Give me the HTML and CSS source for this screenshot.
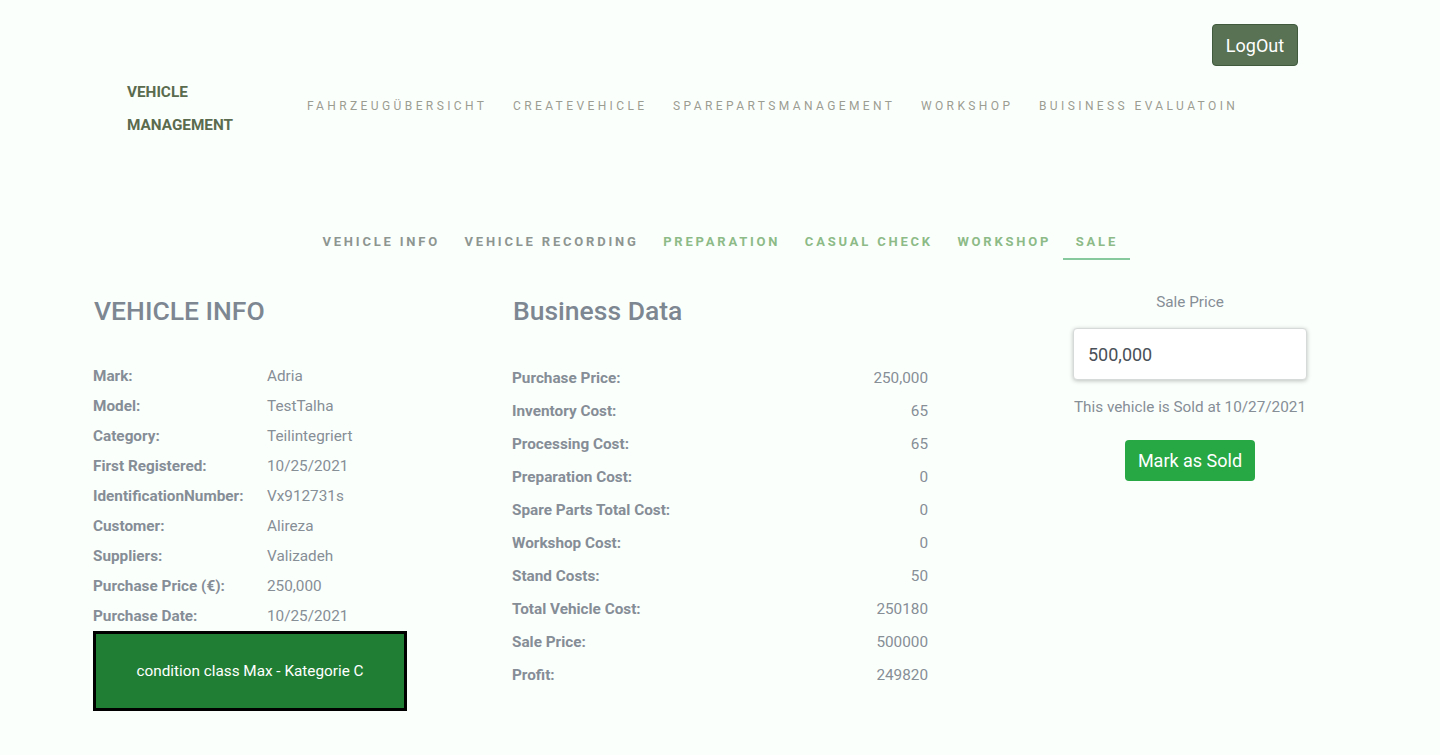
FILE: index.html
```html
<!DOCTYPE html>
<html>
<head>
<meta charset="utf-8">
<link rel="stylesheet" href="styles.css">
</head>
<body>
<div class="topbar">
  <button class="logout">LogOut</button>
</div>
<nav class="navbar">
  <div class="brand">VEHICLE<br>MANAGEMENT</div>
  <ul class="navlinks">
    <li>FAHRZEUGÜBERSICHT</li>
    <li>CREATEVEHICLE</li>
    <li>SPAREPARTSMANAGEMENT</li>
    <li>WORKSHOP</li>
    <li>BUISINESS EVALUATOIN</li>
  </ul>
</nav>
<div class="tabs">
  <span class="tab grey">VEHICLE INFO</span>
  <span class="tab grey">VEHICLE RECORDING</span>
  <span class="tab green">PREPARATION</span>
  <span class="tab green">CASUAL CHECK</span>
  <span class="tab green">WORKSHOP</span>
  <span class="tab green active">SALE</span>
</div>
<main class="content">
  <section class="col info">
    <h2 class="title upper">VEHICLE INFO</h2>
    <div class="info-rows">
      <div class="irow"><span class="lbl">Mark:</span><span class="val">Adria</span></div>
      <div class="irow"><span class="lbl">Model:</span><span class="val">TestTalha</span></div>
      <div class="irow"><span class="lbl">Category:</span><span class="val">Teilintegriert</span></div>
      <div class="irow"><span class="lbl">First Registered:</span><span class="val">10/25/2021</span></div>
      <div class="irow"><span class="lbl">IdentificationNumber:</span><span class="val">Vx912731s</span></div>
      <div class="irow"><span class="lbl">Customer:</span><span class="val">Alireza</span></div>
      <div class="irow"><span class="lbl">Suppliers:</span><span class="val">Valizadeh</span></div>
      <div class="irow"><span class="lbl">Purchase Price (€):</span><span class="val">250,000</span></div>
      <div class="irow"><span class="lbl">Purchase Date:</span><span class="val">10/25/2021</span></div>
    </div>
    <div class="condition">condition class Max - Kategorie C</div>
  </section>
  <section class="col business">
    <h2 class="title">Business Data</h2>
    <div class="brows">
      <div class="brow"><span class="lbl">Purchase Price:</span><span class="val">250,000</span></div>
      <div class="brow"><span class="lbl">Inventory Cost:</span><span class="val">65</span></div>
      <div class="brow"><span class="lbl">Processing Cost:</span><span class="val">65</span></div>
      <div class="brow"><span class="lbl">Preparation Cost:</span><span class="val">0</span></div>
      <div class="brow"><span class="lbl">Spare Parts Total Cost:</span><span class="val">0</span></div>
      <div class="brow"><span class="lbl">Workshop Cost:</span><span class="val">0</span></div>
      <div class="brow"><span class="lbl">Stand Costs:</span><span class="val">50</span></div>
      <div class="brow"><span class="lbl">Total Vehicle Cost:</span><span class="val">250180</span></div>
      <div class="brow"><span class="lbl">Sale Price:</span><span class="val">500000</span></div>
      <div class="brow"><span class="lbl">Profit:</span><span class="val">249820</span></div>
    </div>
  </section>
  <section class="col sale">
    <label class="sale-label">Sale Price</label>
    <input class="sale-input" type="text" value="500,000">
    <p class="sold-note">This vehicle is Sold at 10/27/2021</p>
    <button class="sold-btn">Mark as Sold</button>
  </section>
</main>
</body>
</html>
```
FILE: styles.css
```css
* { box-sizing: border-box; }
html, body { margin: 0; padding: 0; }
body {
  background: #fbfffc;
  font-family: Roboto, "Liberation Sans", sans-serif;
  color: #868e96;
  width: 1440px;
  height: 755px;
  overflow: hidden;
}
.topbar {
  display: flex;
  justify-content: flex-end;
  padding: 24px 142px 0 0;
  height: 66px;
}
.logout {
  width: 86px;
  height: 42px;
  background: #587253;
  border: 1px solid #3f5a3c;
  border-radius: 4px;
  color: #fff;
  font-family: Roboto, sans-serif;
  font-size: 18px;
  padding: 0;
}
.navbar {
  display: flex;
  align-items: flex-start;
  padding-left: 127px;
  height: 78px;
}
.brand {
  color: #5a6b4e;
  font-weight: 700;
  font-size: 15.3px;
  line-height: 33px;
  width: 180px;
  margin-top: 10px;
}
.navlinks {
  list-style: none;
  display: flex;
  margin: 32px 0 0;
  padding: 0;
  gap: 25.5px;
}
.navlinks li {
  font-size: 12px;
  line-height: 16px;
  letter-spacing: 3.4px;
  color: #9b9d92;
}
.tabs {
  display: flex;
  justify-content: center;
  margin-top: 90px;
}
.tab {
  font-size: 13px;
  line-height: 15px;
  font-weight: 700;
  letter-spacing: 2.8px;
  padding: 0 12px 9px 12.5px;
  border-bottom: 2px solid transparent;
}
.tab.grey { color: #8e9691; }
.tab.green { color: #8dbb87; }
.tab.active { border-bottom-color: #86c99d; }
.content {
  display: grid;
  grid-template-columns: 419px 416px 412px;
  padding-left: 93px;
  margin-top: 26px;
}
.title {
  margin: 10px 0 0;
  font-size: 26.5px;
  font-weight: 500;
  color: #7d8792;
  line-height: 30px;
}
.info .title { padding-left: 1px; }
.info-rows { margin-top: 35px; }
.irow {
  display: flex;
  height: 30px;
  line-height: 30px;
  font-size: 15.3px;
}
.irow .lbl { width: 174px; }
.lbl { font-weight: 700; color: #858d96; }
.val { color: #868e96; }
.condition {
  width: 314px;
  height: 80px;
  background: #1f7e34;
  border: 3px solid #000;
  color: #fff;
  font-size: 15.3px;
  display: flex;
  align-items: center;
  justify-content: center;
}
.business .title { padding-left: 1px; }
.brows { margin-top: 36px; }
.brow {
  display: flex;
  justify-content: space-between;
  height: 33px;
  line-height: 33px;
  font-size: 15.3px;
}
.sale {
  padding-left: 112px;
  display: flex;
  flex-direction: column;
  align-items: center;
}
.sale-label {
  font-size: 15.3px;
  line-height: 20px;
  padding-top: 6px;
}
.sale-input {
  margin-top: 16px;
  width: 234px;
  height: 52px;
  border: 1px solid #d6dad8;
  border-radius: 4px;
  background: #fff;
  box-shadow: 0 1px 4px rgba(0,0,0,0.25);
  font-family: Roboto, sans-serif;
  font-size: 18px;
  color: #495057;
  padding: 0 14px;
}
.sold-note {
  margin: 17px 0 0;
  font-size: 15.3px;
  line-height: 20px;
}
.sold-btn {
  margin-top: 23px;
  width: 130px;
  height: 41px;
  background: #28a745;
  border: none;
  border-radius: 4px;
  color: #fff;
  font-family: Roboto, sans-serif;
  font-size: 18px;
  padding: 0;
}
```
